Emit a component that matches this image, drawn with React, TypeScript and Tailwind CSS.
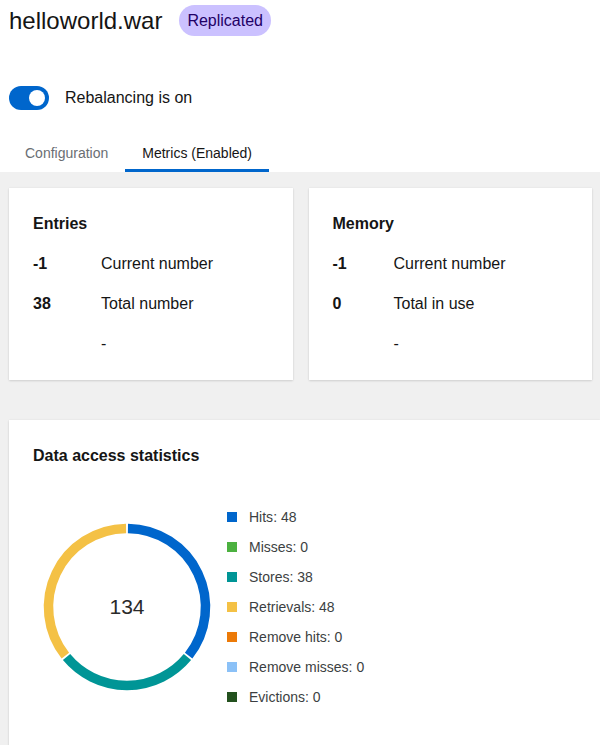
import React from "react";

const legend = [
  { label: "Hits", value: 48, color: "bg-[#0066cc]" },
  { label: "Misses", value: 0, color: "bg-[#4cb140]" },
  { label: "Stores", value: 38, color: "bg-[#009596]" },
  { label: "Retrievals", value: 48, color: "bg-[#f4c145]" },
  { label: "Remove hits", value: 0, color: "bg-[#ec7a08]" },
  { label: "Remove misses", value: 0, color: "bg-[#8bc1f7]" },
  { label: "Evictions", value: 0, color: "bg-[#23511e]" },
];

const segments = [
  { value: 48, stroke: "#0066cc" },
  { value: 38, stroke: "#009596" },
  { value: 48, stroke: "#f4c145" },
];

function arcPath(cx: number, cy: number, r: number, a0: number, a1: number) {
  const p = (a: number) => [cx + r * Math.sin(a), cy - r * Math.cos(a)];
  const [x0, y0] = p(a0);
  const [x1, y1] = p(a1);
  const large = a1 - a0 > Math.PI ? 1 : 0;
  return `M ${x0} ${y0} A ${r} ${r} 0 ${large} 1 ${x1} ${y1}`;
}

function Donut() {
  const total = segments.reduce((s, x) => s + x.value, 0);
  const gap = 0.012;
  let start = 0;
  return (
    <svg width="188" height="188" viewBox="0 0 188 188">
      {segments.map((s, i) => {
        const sweep = (s.value / total) * Math.PI * 2;
        const d = arcPath(94, 94, 78.5, start + gap, start + sweep - gap);
        start += sweep;
        return <path key={i} d={d} fill="none" stroke={s.stroke} strokeWidth="9.5" />;
      })}
      <text x="94" y="101" textAnchor="middle" fontSize="21" fill="#2a2a2a" fontFamily="Liberation Sans, sans-serif">
        134
      </text>
    </svg>
  );
}

function StatCard({ title, rows, valueWidth }: { title: string; rows: [string, string][]; valueWidth: string }) {
  return (
    <div className="bg-white shadow-[0_1px_2px_rgba(3,3,3,0.12),0_0_2px_rgba(3,3,3,0.06)] px-6 pt-[26px] pb-[26px] flex flex-col gap-5">
      <div className="font-bold text-base leading-5 text-[#151515]">{title}</div>
      {rows.map(([v, l], i) => (
        <div key={i} className="flex text-base leading-5 text-[#151515]">
          <div className={`${valueWidth} font-semibold`}>{v}</div>
          <div>{l}</div>
        </div>
      ))}
    </div>
  );
}

export default function App() {
  return (
    <div className="w-[600px] h-[745px] overflow-hidden bg-white text-[#151515]" style={{ fontFamily: "'Liberation Sans', Arial, sans-serif" }}>
      {/* Header */}
      <div className="flex items-center pl-[9px] pt-[5px] h-[36px]">
        <h1 className="text-2xl leading-none text-[#151515]">helloworld.war</h1>
        <span className="ml-[17px] h-[31px] flex items-center px-[8px] rounded-full bg-[#cbc1ff] text-[#1f0066] text-base">
          Replicated
        </span>
      </div>

      {/* Toggle */}
      <div className="flex items-center pl-[9px] mt-[50px]">
        <div className="w-10 h-6 rounded-full bg-[#0066cc] flex items-center justify-end pr-1">
          <div className="w-4 h-4 rounded-full bg-white" />
        </div>
        <span className="ml-4 text-base text-[#151515]">Rebalancing is on</span>
      </div>

      {/* Tabs */}
      <div className="flex pl-2 mt-[26px] text-sm">
        <div className="px-[17px] h-[36px] flex items-center text-[#6a6e73] border-b-[3px] border-transparent">Configuration</div>
        <div className="px-[17px] h-[36px] flex items-center text-[#151515] border-b-[3px] border-[#0066cc]">Metrics (Enabled)</div>
      </div>

      {/* Content */}
      <div className="bg-[#f0f0f0] pl-[9px] pt-4">
        <div className="grid grid-cols-2 gap-4 pr-2">
          <StatCard valueWidth="w-[68px]" title="Entries" rows={[["-1", "Current number"], ["38", "Total number"], ["", "-"]]} />
          <StatCard valueWidth="w-[61px]" title="Memory" rows={[["-1", "Current number"], ["0", "Total in use"], ["", "-"]]} />
        </div>

        <div className="mt-10 bg-white shadow-[0_1px_2px_rgba(3,3,3,0.12),0_0_2px_rgba(3,3,3,0.06)] px-6 pt-[26px] pb-16">
          <div className="font-bold text-base leading-5 text-[#151515]">Data access statistics</div>
          <div className="flex items-center mt-[41px]">
            <Donut />
            <div className="ml-[6px] flex flex-col gap-[10px]">
              {legend.map((l) => (
                <div key={l.label} className="flex items-center h-5 text-sm text-[#3c3f42]">
                  <span className={`w-[10px] h-[10px] ${l.color}`} />
                  <span className="ml-3">
                    {l.label}: {l.value}
                  </span>
                </div>
              ))}
            </div>
          </div>
        </div>
      </div>
    </div>
  );
}
